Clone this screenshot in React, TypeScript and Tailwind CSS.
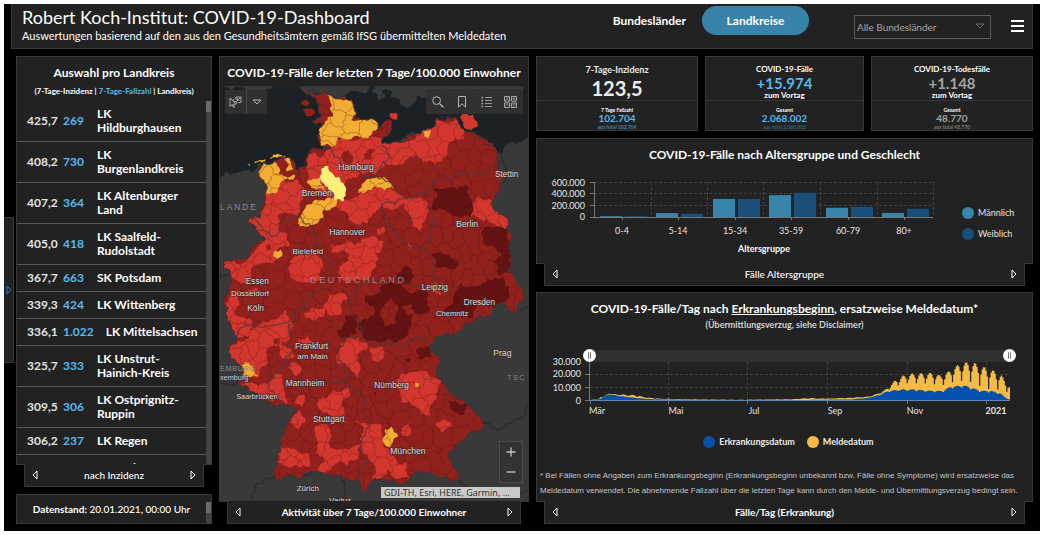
import { useState, type ReactNode } from "react";

type Pt = [number, number];

/* ---------- shared pieces ---------- */

function PagerBar({ label, bold = false }: { label: string; bold?: boolean }) {
  return (
    <nav className="relative z-10 mx-2 -mt-px flex h-[23px] shrink-0 items-center justify-between border border-t-0 border-[#3a3a3a] bg-[#222] px-1 text-white">
      <button type="button" aria-label="Zurück" className="flex h-4 w-3 items-center justify-center">
        <svg viewBox="0 0 6 10" className="h-2.5 w-1.5" fill="none" stroke="currentColor">
          <path d="M5 1 1 5l4 4z" />
        </svg>
      </button>
      <span className={bold ? "text-[10px] font-bold" : "text-[10px] font-medium"}>{label}</span>
      <button type="button" aria-label="Weiter" className="flex h-4 w-3 items-center justify-center">
        <svg viewBox="0 0 6 10" className="h-2.5 w-1.5" fill="none" stroke="currentColor">
          <path d="m1 1 4 4-4 4z" />
        </svg>
      </button>
    </nav>
  );
}

function Panel({ className = "", children }: { className?: string; children: ReactNode }) {
  return <section className={`flex flex-col border border-[#3a3a3a] bg-[#222] ${className}`}>{children}</section>;
}

/* ---------- header ---------- */

function Header() {
  return (
    <header className="mx-[7px] flex h-[45px] shrink-0 items-center border border-t-0 border-[#3a3a3a] bg-[#222] pl-2.5 pr-2 text-white">
      <div className="flex-1 whitespace-nowrap">
        <h1 className="text-[18px] leading-5">Robert Koch-Institut: COVID-19-Dashboard</h1>
        <p className="text-[11px] leading-[18px]">
          Auswertungen basierend auf den aus den Gesundheitsämtern gemäß IfSG übermittelten Meldedaten
        </p>
      </div>
      <div className="mt-0.5 flex items-center self-start text-[12px] font-bold">
        <button type="button" className="h-[29px] px-4">Bundesländer</button>
        <button type="button" className="h-[29px] w-[107px] rounded-full bg-[#3783a9]">Landkreise</button>
      </div>
      <label className="relative ml-[45px] block">
        <span className="sr-only">Bundesland</span>
        <select className="h-6 w-[137px] appearance-none border border-[#5c5c5c] bg-[#222] px-0.5 text-[10px] leading-4 text-[#a5a5a5]">
          <option>Alle Bundesländer</option>
        </select>
        <svg viewBox="0 0 10 6" className="pointer-events-none absolute right-1.5 top-2.5 h-1.5 w-2.5" fill="none" stroke="#6d6d6d">
          <path d="M1 1h8L5 5z" />
        </svg>
      </label>
      <button type="button" aria-label="Menü" className="ml-5 flex w-[13px] flex-col gap-[3px]">
        <span className="h-0.5 w-full bg-white" />
        <span className="h-0.5 w-full bg-white" />
        <span className="h-0.5 w-full bg-white" />
      </button>
    </header>
  );
}

/* ---------- district list ---------- */

const districts: [string, string, string][] = [
  ["425,7", "269", "LK Hildburghausen"],
  ["408,2", "730", "LK Burgenlandkreis"],
  ["407,2", "364", "LK Altenburger Land"],
  ["405,0", "418", "LK Saalfeld-Rudolstadt"],
  ["367,7", "663", "SK Potsdam"],
  ["339,3", "424", "LK Wittenberg"],
  ["336,1", "1.022", "LK Mittelsachsen"],
  ["325,7", "333", "LK Unstrut-Hainich-Kreis"],
  ["309,5", "306", "LK Ostprignitz-Ruppin"],
  ["306,2", "237", "LK Regen"],
  ["301,8", "585", "LK Saale-Holzland-Kreis"],
];

function DistrictColumn() {
  return (
    <div className="flex min-h-0 flex-col">
      <Panel className="min-h-0 flex-1 basis-0">
        <div className="h-11 shrink-0 pt-2 text-center text-white">
          <h2 className="text-[12px] font-bold leading-4">Auswahl pro Landkreis</h2>
          <p className="pt-1 text-[8px] font-bold leading-3">
            (7-Tage-Inzidenz | <span className="text-[#56b9f0]">7-Tage-Fallzahl</span> | Landkreis)
          </p>
        </div>
        <div className="flex min-h-0 flex-1">
          <ul className="flex-1 overflow-hidden">
            {districts.map(([rate, cases, name]) => (
              <li key={name} className="flex items-center border-b border-[#585858] py-1.5 pl-2.5 pr-0.5 text-[12px] font-bold leading-[14px]">
                <span className="w-9 shrink-0 text-[#e2e2e2]">{rate}</span>
                <span className="min-w-[22px] shrink-0 text-[#56b9f0]">{cases}</span>
                <span className="ml-3 max-w-[97px] text-white">{name}</span>
              </li>
            ))}
          </ul>
          <div className="w-[5px] bg-[#424242]">
            <div className="h-[11px] bg-[#6a6a6a]" />
          </div>
        </div>
      </Panel>
      <PagerBar label="nach Inzidenz" />
      <Panel className="mt-[7px] h-[30px]">
        <div className="flex h-full">
          <p className="flex-1 self-center whitespace-nowrap text-center text-[10px] font-medium text-white">
            <b>Datenstand:</b> 20.01.2021, 00:00 Uhr
          </p>
          <div className="mt-[7px] w-[5px] bg-[#424242]">
            <div className="h-[11px] bg-[#6a6a6a]" />
          </div>
        </div>
      </Panel>
    </div>
  );
}

/* ---------- map ---------- */

function hash(a: number, b: number) {
  const s = Math.sin(a * 12.9898 + b * 78.233) * 43758.5453;
  return s - Math.floor(s);
}

/* Splits an edge and displaces its middle; both directions give the same curve. */
function split(a: Pt, b: Pt, amount: number, out: Pt[]) {
  const dx = b[0] - a[0];
  const dy = b[1] - a[1];
  const len = Math.hypot(dx, dy);
  if (len < 9) {
    out.push(b);
    return;
  }
  const k = (hash(a[0] + b[0], a[1] + b[1]) - 0.5) * amount;
  const sign = dx > 0 || (dx === 0 && dy > 0) ? 1 : -1;
  const m: Pt = [(a[0] + b[0]) / 2 - dy * k * sign, (a[1] + b[1]) / 2 + dx * k * sign];
  split(a, m, amount, out);
  split(m, b, amount, out);
}

function parse(s: string): Pt[] {
  return s.split(" ").map((p) => p.split(",").map(Number) as Pt);
}

function toPath(pts: Pt[], closed = true, amount = 0.5) {
  const out: Pt[] = [pts[0]];
  const n = closed ? pts.length : pts.length - 1;
  for (let i = 0; i < n; i++) split(pts[i], pts[(i + 1) % pts.length], amount, out);
  return "M" + out.map((p) => `${p[0].toFixed(1)} ${p[1].toFixed(1)}`).join("L") + (closed ? "Z" : "");
}

const rough = (s: string, closed = true, amount = 0.5) => toPath(parse(s), closed, amount);

/* Voronoi cells on a jittered grid stand for the district borders. */
function districtBorders() {
  const step = 46;
  const seeds: Pt[] = [];
  for (let y = 80; y < 1380; y += step)
    for (let x = -20; x < 990; x += step) seeds.push([x + hash(x, y) * 42, y + hash(y, x) * 42]);
  let d = "";
  for (const s of seeds) {
    let poly: Pt[] = [
      [s[0] - 90, s[1] - 90],
      [s[0] + 90, s[1] - 90],
      [s[0] + 90, s[1] + 90],
      [s[0] - 90, s[1] + 90],
    ];
    for (const t of seeds) {
      if (t === s || Math.abs(t[0] - s[0]) > 150 || Math.abs(t[1] - s[1]) > 150) continue;
      const nx = t[0] - s[0];
      const ny = t[1] - s[1];
      const c = (nx * (t[0] + s[0]) + ny * (t[1] + s[1])) / 2;
      const next: Pt[] = [];
      poly.forEach((p, i) => {
        const q = poly[(i + 1) % poly.length];
        const dp = nx * p[0] + ny * p[1] - c;
        const dq = nx * q[0] + ny * q[1] - c;
        if (dp <= 0) next.push(p);
        if (dp < 0 !== dq < 0) {
          const k = dp / (dp - dq);
          next.push([p[0] + (q[0] - p[0]) * k, p[1] + (q[1] - p[1]) * k]);
        }
      });
      poly = next;
    }
    if (poly.length > 2) d += toPath(poly.map((p) => [Math.round(p[0]), Math.round(p[1])] as Pt), true, 0.55);
  }
  return d;
}

const bordersPath = districtBorders();

const country = rough(
  "288,124 330,128 345,135 385,138 410,150 418,165 425,190 415,203 440,210 470,205 490,228 492,240 500,225 520,210 532,215 530,240 505,262 500,280 520,280 555,278 590,255 625,240 650,235 665,205 700,200 725,205 748,240 770,245 800,265 830,290 848,305 852,350 862,380 858,430 835,450 828,465 850,485 880,510 875,540 890,580 892,640 880,665 905,690 922,715 923,755 902,790 885,782 870,762 850,765 835,785 800,800 780,815 740,845 700,850 670,860 655,880 645,890 655,910 675,935 665,960 680,1000 700,1025 730,1050 755,1065 780,1085 800,1110 802,1138 765,1150 755,1170 720,1190 700,1210 705,1235 720,1260 728,1290 710,1298 695,1280 660,1280 630,1270 600,1270 580,1295 550,1305 520,1300 500,1290 480,1290 465,1300 460,1325 448,1328 435,1305 425,1290 390,1292 365,1280 340,1275 320,1270 290,1265 280,1270 255,1288 215,1282 200,1290 180,1285 185,1250 185,1220 195,1190 205,1160 215,1130 235,1095 248,1075 215,1068 190,1068 160,1055 130,1040 100,1025 95,1010 70,1002 70,990 85,970 75,950 45,930 40,905 60,880 65,860 50,840 35,815 30,790 40,775 20,765 30,740 40,720 50,695 45,670 25,655 25,635 60,630 100,625 105,605 150,570 130,555 120,530 98,520 105,505 135,505 140,470 150,430 148,400 128,385 128,365 145,335 185,332 225,325 240,350 245,375 255,350 275,350 275,320 285,300 320,298 345,295 315,288 308,260 310,240 325,215 300,225 290,215 320,195 310,180 305,150",
);

const sea = [
  rough("12,100 252,100 262,125 300,130 330,220 320,305 290,330 260,385 225,330 130,340 110,368 60,372 12,382"),
  rough("380,140 400,128 450,132 470,100 942,100 942,262 890,275 868,292 858,310 840,300 700,240 500,300 420,220 400,170"),
];

const foreignIslands = [
  rough("525,118 575,112 612,120 606,145 588,170 560,165 530,142"),
  rough("470,122 500,118 512,138 490,150"),
  rough("590,100 700,100 680,125 620,122"),
  rough("740,100 830,100 800,118 760,116"),
];

const germanIslands = {
  mid: [
    rough("262,110 275,120 268,130"),
    rough("256,150 275,148 284,160 270,168 258,162"),
    rough("262,180 290,176 300,190 280,200"),
    rough("800,262 835,280 838,305 812,300"),
  ],
  bright: [rough("736,200 775,195 790,225 770,240 745,225"), rough("524,192 548,192 548,208 530,206")],
  orange: [rough("92,344 105,340 104,350"), rough("118,336 150,328 150,332 118,340"), rough("165,324 210,318 208,323 165,328")],
};

const bright = [
  "345,270 400,272 460,268 500,265 560,278 620,245 665,205 725,205 748,240 750,265 700,285 695,320 660,345 625,335 605,310 580,325 540,345 505,335 510,350 480,375 450,370 400,385 390,400 385,450 440,430 480,415 530,420 580,445 640,465 635,500 615,545 590,530 580,490 570,460 500,465 480,490 460,520 430,524 400,500 380,485 360,470 330,440 310,420 275,400 275,310 350,300",
  "765,470 790,440 835,450 850,485 880,510 872,542 850,535 830,520 800,510 770,500",
  "150,430 200,395 250,390 265,410 262,450 245,500 210,490 185,500 190,540 215,555 220,590 185,600 175,640 125,645 105,690 85,700 60,690 25,655 25,635 100,625 150,570 98,520 105,505 135,500",
  "220,660 245,620 300,610 325,650 320,690 260,700 225,680",
  "345,580 400,570 420,590 480,560 508,575 500,600 480,610 485,650 440,690 400,700 370,670 385,640 400,610 350,610",
  "485,540 505,530 510,550 490,555",
  "580,580 590,590 580,602",
  "325,770 340,735 380,730 400,745 375,795 345,798",
  "265,790 290,775 328,772 325,800 300,815 270,805",
  "30,770 45,740 75,720 70,770 62,800 110,815 100,860 65,865 35,815",
  "95,720 125,715 130,735 105,740",
  "45,890 100,870 110,840 180,810 210,780 235,830 222,870 200,880 232,900 240,920 200,925 190,885 160,895 160,940 135,955 125,985 85,970 45,930 40,905",
  "100,1000 160,1000 172,970 200,975 205,1010 215,1065 170,1055 110,1030 80,1005",
  "220,955 240,940 260,960 245,980",
  "238,1060 265,1035 258,1075",
  "235,1095 255,1085 270,1120 250,1140 225,1120",
  "250,870 275,860 290,880 265,890",
  "370,910 400,865 455,880 455,900 425,915 435,950 425,1000 405,960 365,940",
  "465,895 500,890 510,910 490,940 470,920",
  "545,990 580,970 650,985 680,1000 665,1050 650,1102 600,1070 560,1060 550,1020",
  "660,1120 690,1110 710,1130 680,1150",
  "310,1050 350,1025 400,1015 405,1040 380,1060 390,1100 360,1110 320,1085",
  "302,1130 335,1125 340,1180 380,1200 435,1190 430,1230 360,1245 330,1270 290,1265 325,1240 300,1210 310,1180",
  "190,1200 240,1200 285,1215 285,1250 220,1255 185,1240",
  "420,1115 450,1120 500,1125 505,1190 530,1220 545,1250 580,1235 582,1290 540,1290 520,1260 500,1290 470,1290 480,1250 460,1220 435,1190 445,1150",
  "560,1140 590,1110 582,1160 562,1160",
  "655,705 670,700 680,735 660,725",
].map((s) => rough(s));

const mid = [
  "380,315 400,300 415,320 405,345 385,335",
  "445,315 480,295 470,330 440,335",
  "240,350 275,350 272,420 245,390",
  "150,590 165,585 170,600 155,605",
  "175,870 190,865 192,885 178,885",
].map((s) => rough(s));

const dark = [
  "650,405 700,415 750,405 770,450 760,500 720,500 690,480 650,480",
  "805,540 850,530 890,580 890,650 880,670 850,675 835,640 860,610 805,580",
  "655,610 700,615 735,640 720,660 660,650",
  "545,670 570,650 598,680 590,705 550,700",
  "450,740 500,705 560,700 580,730 640,730 640,790 600,790 580,840 545,880 490,880 440,850 430,820 480,790 450,760",
  "370,840 390,800 425,800 425,850 395,865 368,850",
  "690,780 740,700 790,710 820,690 870,690 885,740 800,760 780,815 740,795 695,800",
  "605,910 640,890 645,925 615,930",
  "570,930 585,925 580,940",
  "470,1030 485,1028 482,1038",
  "700,1055 760,1060 750,1095 715,1085",
].map((s) => rough(s));

const thuringiaGaps = [
  "505,770 530,745 550,770 545,820 510,830 495,800",
  "560,770 590,760 600,790 575,795",
].map((s) => rough(s));

const orange = [
  "335,135 410,140 425,190 400,215 440,210 470,205 492,235 460,265 400,270 370,262 350,292 315,288 308,240 330,215 355,200 350,165",
  "128,365 145,335 178,335 190,370 210,380 240,375 235,390 200,395 180,430 150,425 148,390",
  "208,326 225,325 235,360 215,365",
  "275,400 315,385 325,410 345,435 310,415",
  "255,530 260,495 300,450 365,445 360,470 325,480 325,505 290,525",
  "430,430 450,395 480,385 520,390 538,418 480,410",
  "175,605 195,600 200,620 185,630",
  "624,245 645,238 640,265 628,258",
  "510,1140 530,1133 550,1158 535,1175 525,1195 512,1190",
  "70,985 80,950 100,940 115,965 128,980 80,992",
  "600,1002 611,1002 611,1011 600,1011",
].map((s) => rough(s));

const stateLines = [
  "345,295 380,345 440,375 480,380 520,330 500,285",
  "480,380 520,395 580,445 640,430 655,390 760,370 852,350",
  "580,445 500,465 510,520 560,570 620,600 650,560 640,470",
  "620,600 650,650 640,720 560,690 480,690 400,750 430,820 500,890 600,860 650,890",
  "105,505 190,550 250,500 300,560 350,640 330,700 240,790 160,830 60,860",
  "240,790 235,900 160,990 200,1068",
  "240,990 340,1000 400,980 365,900 430,860",
  "400,980 450,1060 465,1120 440,1180 430,1290",
].map((s) => rough(s, false));

const foreignLines = [
  "942,770 900,780",
  "802,1120 840,1140 900,1110 942,1070",
  "290,1265 200,1290 120,1310 110,1356",
  "380,1285 390,1320 360,1356",
  "728,1290 760,1320 830,1335 942,1320",
  "12,690 60,650",
  "12,1000 70,995",
  "858,310 872,350 865,400",
].map((s) => rough(s, false));

const cityLabels: [string, number, number, number][] = [
  ["Hamburg", 423, 361, 26],
  ["Bremen", 305, 440, 26],
  ["Stettin", 876, 381, 25],
  ["Berlin", 757, 532, 26],
  ["Hannover", 397, 556, 25],
  ["Bielefeld", 278, 612, 24],
  ["Essen", 126, 703, 25],
  ["Düsseldorf", 104, 741, 24],
  ["Köln", 121, 785, 25],
  ["Leipzig", 660, 720, 25],
  ["Dresden", 794, 766, 25],
  ["Chemnitz", 712, 800, 23],
  ["Frankfurt", 289, 900, 25],
  ["am Main", 292, 928, 24],
  ["Prag", 863, 920, 26],
  ["Mannheim", 270, 1010, 25],
  ["Nürnberg", 530, 1015, 25],
  ["Saarbrücken", 125, 1048, 22],
  ["Stuttgart", 341, 1119, 25],
  ["München", 579, 1214, 26],
  ["Zürich", 278, 1326, 24],
  ["Vaduz", 375, 1362, 24],
];

function GermanyMap() {
  return (
    <svg viewBox="12 108 930 1248" preserveAspectRatio="xMidYMid slice" className="absolute inset-0 h-full w-full" role="img" aria-label="Karte der 7-Tage-Inzidenz je Landkreis">
      <defs>
        <clipPath id="country">
          <path d={country} />
        </clipPath>
      </defs>
      <rect x="12" y="108" width="930" height="1248" fill="#393939" />
      {sea.map((d) => <path key={d} d={d} fill="#1b2124" />)}
      {foreignIslands.map((d) => <path key={d} d={d} fill="#393939" />)}
      {foreignLines.map((d) => <path key={d} d={d} fill="none" stroke="#2a2d2e" strokeWidth="4" />)}
      <path d={country} fill="#92211d" />
      {germanIslands.mid.map((d) => <path key={d} d={d} fill="#92211d" />)}
      {germanIslands.bright.map((d) => <path key={d} d={d} fill="#d3362e" />)}
      {germanIslands.orange.map((d) => <path key={d} d={d} fill="#f2ad33" />)}
      <g clipPath="url(#country)">
        {bright.map((d) => <path key={d} d={d} fill="#d3362e" />)}
        {mid.map((d) => <path key={d} d={d} fill="#92211d" />)}
        {dark.map((d) => <path key={d} d={d} fill="#641312" />)}
        {thuringiaGaps.map((d) => <path key={d} d={d} fill="#92211d" />)}
        {orange.map((d) => <path key={d} d={d} fill="#f2ad33" />)}
        <path d={bordersPath} fill="none" stroke="#4a2020" strokeOpacity="0.32" strokeWidth="1.5" />
        <path d={rough("320,355 340,350 355,375 385,400 393,422 385,455 360,450 350,425 325,400")} fill="#fcf07c" />
        {stateLines.map((d) => <path key={d} d={d} fill="none" stroke="#4a3838" strokeOpacity="0.7" strokeWidth="4" />)}
      </g>
      <path d={country} fill="none" stroke="#3c3434" strokeWidth="3" />
      <g fontFamily="'Liberation Sans', Arial, sans-serif" textAnchor="middle">
        <g fill="#8a8a8a" fontSize="25">
          <text x="14" y="480" textAnchor="start" letterSpacing="6">LANDE</text>
          <text x="430" y="699" fill="#a5837f" fontSize="27" letterSpacing="8">DEUTSCHLAND</text>
          <text x="14" y="965" textAnchor="start" fontSize="22" letterSpacing="2">EMBURG</text>
          <text x="878" y="992" textAnchor="start" fontSize="22" letterSpacing="4">TSC</text>
        </g>
        <text x="14" y="991" textAnchor="start" fontSize="22" fill="#d0cccc" stroke="#333" strokeWidth="3" paintOrder="stroke">xemburg</text>
        {cityLabels.map(([name, x, y, size]) => (
          <text key={name} x={x} y={y} fontSize={size} fill="#dedada" stroke="#3a2a2a" strokeOpacity="0.8" strokeWidth="4" paintOrder="stroke">
            {name}
          </text>
        ))}
      </g>
    </svg>
  );
}

const toolButton = "flex h-full flex-1 items-center justify-center";

function MapColumn() {
  return (
    <div className="flex min-h-0 flex-col">
      <Panel className="min-h-0 flex-1 basis-0">
        <h2 className="h-[29px] shrink-0 whitespace-nowrap pt-2 text-center text-[12px] font-bold leading-4 text-white">
          COVID-19-Fälle der letzten 7 Tage/100.000 Einwohner
        </h2>
        <div className="relative min-h-0 flex-1 overflow-hidden">
          <GermanyMap />
          <div className="absolute left-[5px] top-1 flex h-6 w-[42px] bg-[#303030] text-[#b5b5b5]">
            <button type="button" aria-label="Auswählen" className={`${toolButton} border-r border-[#484848]`}>
              <svg viewBox="0 0 13 12" className="h-3 w-[13px]" fill="none" stroke="currentColor" strokeWidth="0.9">
                <path d="M1 2v8.5l2-2 1.5 3 1-.6-1.3-2.7H7zM4 4.5V3.6h1.4M7 3.6V1h5v5.6H9.2M5 5.6h2.6v2.2M8 5l3-3M8.4 2.4v1.8h1.8" />
              </svg>
            </button>
            <button type="button" aria-label="Auswahlart" className={toolButton}>
              <svg viewBox="0 0 10 6" className="h-1.5 w-2.5" fill="none" stroke="currentColor">
                <path d="M1 1h8L5 5z" />
              </svg>
            </button>
          </div>
          <div className="absolute right-[5px] top-[3px] flex h-[25px] w-[97px] bg-[#303030] text-[#b5b5b5]">
            <button type="button" aria-label="Suche" className={toolButton}>
              <svg viewBox="0 0 12 12" className="size-3" fill="none" stroke="currentColor">
                <circle cx="4.6" cy="4.6" r="3.9" />
                <path d="m7.4 7.4 4.1 4.1" strokeWidth="1.3" />
              </svg>
            </button>
            <button type="button" aria-label="Lesezeichen" className={toolButton}>
              <svg viewBox="0 0 8 12" className="h-3 w-2" fill="none" stroke="currentColor">
                <path d="M.5.5h7v10.6L4 7.8.5 11.1z" />
              </svg>
            </button>
            <button type="button" aria-label="Legende" className={toolButton}>
              <svg viewBox="0 0 11 12" className="h-3 w-[11px]" fill="none" stroke="currentColor">
                <path d="M4 1.5h7M4 4.5h7M4 7.5h7M4 10.5h7" strokeWidth="0.8" />
                <path d="M.5 1.5H2M.5 4.5H2M.5 7.5H2M.5 10.5H2" strokeWidth="1.4" />
              </svg>
            </button>
            <button type="button" aria-label="Grundkarte" className={toolButton}>
              <svg viewBox="0 0 13 12" className="h-3 w-[13px]" fill="none" stroke="currentColor" strokeWidth="0.9">
                <path d="M.5.5h5v4.6h-5zM7.5.5h5v4.6h-5zM.5 6.9h5v4.6h-5zM7.5 6.9h5v4.6h-5z" />
                <path d="m1.5 4 3-2.5M2 1.5l2.5 2M8.5 2.8h3M10 1.2v3M1.6 9.8 3 8.2l1.4 1.6M8.6 8.2h3M8.6 10h2" strokeWidth="0.7" />
              </svg>
            </button>
          </div>
          <div className="absolute bottom-[18px] right-[5px] flex h-[42px] w-6 flex-col border border-[#4c4c4c] bg-[#333] text-[#c5c5c5]">
            <button type="button" aria-label="Vergrößern" className={toolButton}>
              <svg viewBox="0 0 10 10" className="size-2.5" stroke="currentColor" strokeWidth="1.3">
                <path d="M5 .5v9M.5 5h9" />
              </svg>
            </button>
            <button type="button" aria-label="Verkleinern" className={toolButton}>
              <svg viewBox="0 0 10 10" className="size-2.5" stroke="currentColor" strokeWidth="1.3">
                <path d="M.5 5h9" />
              </svg>
            </button>
          </div>
          <p className="absolute bottom-[3px] right-2 h-[11px] w-[139px] whitespace-nowrap bg-[#cacaca] pl-[3px] font-['Noto_Sans',sans-serif] text-[9px] leading-[11px] text-[#333]">
            GDI-TH, Esri, HERE, Garmin, …
          </p>
        </div>
      </Panel>
      <PagerBar label="Aktivität über 7 Tage/100.000 Einwohner" bold />
    </div>
  );
}

/* ---------- key figures ---------- */

function TotalBlock({ label, value, note, color, noteColor }: { label: string; value: string; note: string; color: string; noteColor: string }) {
  return (
    <div className="flex flex-1 flex-col items-center border-t border-[#363636] pt-1.5">
      <p className="text-[5px] font-bold leading-[6px] text-white">{label}</p>
      <p className={`text-[10px] font-bold leading-[11px] ${color}`}>{value}</p>
      <p className={`text-[5px] font-bold leading-[6px] ${noteColor}`}>{note}</p>
    </div>
  );
}

function DeltaCard({ title, delta, children, color }: { title: string; delta: string; color: string; children: ReactNode }) {
  return (
    <Panel className="h-[75px]">
      <div className="flex h-[43px] shrink-0 flex-col items-center pt-2 font-bold text-white">
        <h3 className="text-[8px] leading-[9px]">{title}</h3>
        <p className={`text-[15px] leading-[18px] ${color}`}>{delta}</p>
        <p className="text-[8px] leading-[7px]">zum Vortag</p>
      </div>
      {children}
    </Panel>
  );
}

function KeyFigures() {
  return (
    <div className="grid shrink-0 grid-cols-[162fr_159fr_162fr] gap-[7px]">
      <Panel className="h-[75px]">
        <div className="flex h-[43px] shrink-0 flex-col items-center pt-1.5 font-bold">
          <h3 className="text-[9px] leading-[14px] text-[#e8e8e8]">7-Tage-Inzidenz</h3>
          <p className="text-[20px] leading-[22px] text-[#ececec]">123,5</p>
        </div>
        <TotalBlock label="7 Tage Fallzahl" value="102.704" note="aus total 102.704" color="text-[#56b9f0]" noteColor="text-[#3f86ad]" />
      </Panel>
      <DeltaCard title="COVID-19-Fälle" delta="+15.974" color="text-[#56b9f0]">
        <TotalBlock label="Gesamt" value="2.068.002" note="aus total 2.068.002" color="text-[#56b9f0]" noteColor="text-[#2f647f]" />
      </DeltaCard>
      <DeltaCard title="COVID-19-Todesfälle" delta="+1.148" color="text-[#a3a3a3]">
        <TotalBlock label="Gesamt" value="48.770" note="aus total 48.770" color="text-[#a3a3a3]" noteColor="text-[#7c7c7c]" />
      </DeltaCard>
    </div>
  );
}

/* ---------- age chart ---------- */

const ageGroups = [
  { label: "0-4", x: 600, m: 15, f: 14 },
  { label: "5-14", x: 656, m: 68, f: 55 },
  { label: "15-34", x: 713, m: 310, f: 310 },
  { label: "35-59", x: 769, m: 375, f: 415 },
  { label: "60-79", x: 826, m: 158, f: 175 },
  { label: "80+", x: 882, m: 70, f: 140 },
];

function LegendItem({ dot, label }: { dot: string; label: string }) {
  return (
    <li className="flex items-center gap-1">
      <span className={`size-3 shrink-0 rounded-full ${dot}`} />
      {label}
    </li>
  );
}

function AgeChart() {
  const base = 217;
  const perUnit = 35 / 600;
  return (
    <>
      <Panel className="h-[126px] shrink-0">
        <h2 className="pt-2 text-center text-[12px] font-bold leading-4 text-white">COVID-19-Fälle nach Altersgruppe und Geschlecht</h2>
        <div className="flex pl-2 pt-2.5">
          <svg viewBox="545 173 405 86" className="min-w-0 flex-1" role="img" aria-label="Fälle nach Altersgruppe">
            <g stroke="#404040" strokeDasharray="3 2">
              <path d="M594 182.5h339M594 193.5h339M594 205.5h339" />
              <path d="M651.5 182v35M707.5 182v35M763.5 182v35M820.5 182v35M877.5 182v35M933.5 182v35" />
            </g>
            {ageGroups.map((g) => (
              <g key={g.label}>
                <rect x={g.x} y={base - g.m * perUnit} width="22" height={g.m * perUnit} fill="#3785ab" />
                <rect x={g.x + 25} y={base - g.f * perUnit} width="22" height={g.f * perUnit} fill="#194f78" />
                <path d={`M${g.x + 22.5} 217v3`} stroke="#777" />
                <text x={g.x + 22} y="234" textAnchor="middle" fontSize="9" fill="#e4e4e4">{g.label}</text>
              </g>
            ))}
            <path d="M594.5 182v35.5M590 182.5h4M590 193.5h4M590 205.5h4M590 217.5h343" stroke="#777" fill="none" />
            <g fontSize="9" fill="#e4e4e4" textAnchor="end">
              <text x="585" y="186">600.000</text>
              <text x="585" y="197">400.000</text>
              <text x="585" y="209">200.000</text>
              <text x="585" y="220">0</text>
            </g>
            <text x="764" y="252" textAnchor="middle" fontSize="9" fontWeight="700" fill="#fff">Altersgruppe</text>
          </svg>
          <ul className="flex w-[82px] shrink-0 flex-col gap-[9px] pl-3 pt-[34px] text-[9px] leading-3 text-[#e4e4e4]">
            <LegendItem dot="bg-[#3785ab]" label="Männlich" />
            <LegendItem dot="bg-[#194f78]" label="Weiblich" />
          </ul>
        </div>
      </Panel>
      <PagerBar label="Fälle Altersgruppe" />
    </>
  );
}

/* ---------- daily chart ---------- */

function interpolate(points: Pt[], x: number) {
  for (let i = 1; i < points.length; i++) {
    const [x0, y0] = points[i - 1];
    const [x1, y1] = points[i];
    if (x <= x1) return y0 + ((y1 - y0) * (x - x0)) / (x1 - x0);
  }
  return points[points.length - 1][1];
}

/* Cases per day in thousands; the first number is the horizontal place on the axis. */
const peaks: Pt[] = [[590, 0.4], [598, 1], [604, 3.2], [608, 5.4], [618, 4.6], [635, 4.2], [645, 2.3], [660, 1.4], [700, 0.8], [740, 0.6], [790, 1], [808, 2], [825, 1.4], [850, 2.2], [868, 3], [880, 6], [888, 10], [894, 15], [903, 19], [911, 20.5], [930, 21], [940, 19], [948, 22], [957, 27], [965, 29], [974, 28.5], [983, 25.5], [992, 23], [1001, 19], [1007, 12], [1010, 10]];
const troughs: Pt[] = [[590, 0.3], [608, 4.6], [635, 2.5], [660, 0.9], [700, 0.5], [740, 0.3], [790, 0.7], [850, 1.6], [868, 2.2], [880, 5], [893, 9], [905, 11], [925, 11], [945, 10], [955, 13], [968, 13], [985, 8], [1000, 8], [1010, 5]];
const onset: Pt[] = [[590, 0.3], [598, 1], [604, 3], [608, 4.8], [618, 3.4], [635, 1.9], [650, 1], [700, 0.3], [740, 0.2], [790, 0.3], [850, 0.8], [868, 2], [878, 4], [888, 7], [900, 8], [912, 8], [930, 7], [942, 7], [950, 10], [963, 11], [972, 9], [980, 7], [990, 7], [1000, 5], [1005, 2], [1010, 0.4]];

const days = Array.from({ length: 325 }, (_, i) => {
  const x = 590 + (i * 420) / 325;
  const wave = Math.pow(Math.abs(Math.cos(((x - 965.5) / 9.02) * Math.PI)), 0.6);
  const low = interpolate(troughs, x);
  const total = low + (interpolate(peaks, x) - low) * wave;
  const blue = Math.min(total, interpolate(onset, x) * (0.86 + 0.2 * wave));
  return { x, total, blue };
});

const yOf = (v: number) => 401.5 - v * 1.32;

function seriesPath(key: "total" | "blue") {
  return "M590 401.5" + days.map((d) => `V${yOf(d[key]).toFixed(1)}H${(d.x + 1.3).toFixed(1)}`).join("") + "V401.5Z";
}

const totalPath = seriesPath("total");
const onsetPath = seriesPath("blue");

const months: [string, number, number][] = [
  ["Mär", 597, 590],
  ["Mai", 676, 668],
  ["Jul", 754, 747],
  ["Sep", 835, 827],
  ["Nov", 915, 907],
  ["2021", 996, 986],
];

const rangeClass =
  "pointer-events-none col-start-1 row-start-1 h-[13px] w-full appearance-none bg-transparent [&::-webkit-slider-thumb]:pointer-events-auto [&::-webkit-slider-thumb]:size-[13px] [&::-webkit-slider-thumb]:appearance-none [&::-webkit-slider-thumb]:rounded-full [&::-webkit-slider-thumb]:bg-white [&::-webkit-slider-thumb]:bg-[linear-gradient(90deg,#fff_5px,#777_5px,#777_6px,#fff_6px,#fff_7px,#777_7px,#777_8px,#fff_8px)] [&::-webkit-slider-thumb]:shadow-[inset_0_3px_0_#fff,inset_0_-3px_0_#fff]";

function DailyChart() {
  const [from, setFrom] = useState(0);
  const [to, setTo] = useState(325);
  return (
    <>
      <Panel className="mt-1.5 shrink-0 pb-[3px]">
        <div className="pt-2 text-center font-bold">
          <h2 className="text-[12px] leading-4 text-white">
            COVID-19-Fälle/Tag nach <u>Erkrankungsbeginn</u>, ersatzweise Meldedatum*
          </h2>
          <p className="text-[9px] leading-4 text-[#d2d2d2]">(Übermittlungsverzug, siehe Disclaimer)</p>
        </div>
        <div className="relative z-10 ml-[46px] mr-4 mt-4 grid">
          <div className="col-start-1 row-start-1 mx-1.5 mt-px h-3 bg-[#303030]" />
          <input type="range" aria-label="Beginn" min={0} max={325} value={from} onChange={(e) => setFrom(Math.min(+e.target.value, to))} className={rangeClass} />
          <input type="range" aria-label="Ende" min={0} max={325} value={to} onChange={(e) => setTo(Math.max(+e.target.value, from))} className={rangeClass} />
        </div>
        <svg viewBox="545 355 480 64" className="-mt-2 ml-2 mr-[7px]" role="img" aria-label="Fälle pro Tag">
          <g stroke="#404040" strokeDasharray="3 2">
            <path d="M590 362.5h420M590 375.5h420M590 388.5h420" />
            <path d="M668.5 363v38M747.5 363v38M827.5 363v38M907.5 363v38M986.5 363v38" />
          </g>
          <path d={totalPath} fill="#f5bb45" />
          <path d={onsetPath} fill="#0651ad" />
          <path d="M589.5 362v39.5M585 375.5h4M585 388.5h4M585 401.5h5" stroke="#777" />
          <path d="M590 401.5h420" stroke="#5b87bd" />
          <g fontSize="9" fill="#e4e4e4">
            <g textAnchor="end">
              <text x="581" y="366">30.000</text>
              <text x="581" y="378">20.000</text>
              <text x="581" y="392">10.000</text>
              <text x="581" y="405">0</text>
            </g>
            {months.map(([name, x, tick]) => (
              <g key={name}>
                <path d={`M${tick + 0.5} 402v3`} stroke="#777" />
                <text x={x} y="415" textAnchor="middle" fontWeight={name === "2021" ? 700 : 400}>{name}</text>
              </g>
            ))}
          </g>
        </svg>
        <ul className="flex justify-center gap-3 pl-2 pt-[18px] text-[9px] font-bold leading-3 text-[#ececec]">
          <LegendItem dot="bg-[#0651ad]" label="Erkrankungsdatum" />
          <LegendItem dot="bg-[#f5bb45]" label="Meldedatum" />
        </ul>
        <p className="pl-[3px] pt-5 font-['Liberation_Sans',Arial,sans-serif] text-[8px] leading-[15px] text-[#c4c4c4]">
          * Bei Fällen ohne Angaben zum Erkrankungsbeginn (Erkrankungsbeginn unbekannt bzw. Fälle ohne Symptome) wird ersatzweise das
          <br />
          Meldedatum verwendet. Die abnehmende Fallzahl über die letzten Tage kann durch den Melde- und Übermittlungsverzug bedingt sein.
        </p>
      </Panel>
      <PagerBar label="Fälle/Tag (Erkrankung)" bold />
    </>
  );
}

/* ---------- page ---------- */

export default function App() {
  return (
    <div className="flex min-h-screen flex-col bg-white py-1 pl-1 pr-px font-[Lato,sans-serif]">
      <div className="flex flex-1 flex-col bg-black pb-[7px]">
        <Header />
        <main className="mt-[7px] flex flex-1 pr-[7px]">
          <button type="button" aria-label="Seitenleiste öffnen" className="mr-0.5 mt-[161px] flex h-[146px] w-2.5 shrink-0 items-center justify-center border border-l-0 border-[#3a3a3a] bg-[#222]">
            <svg viewBox="0 0 6 10" className="h-2.5 w-1.5" fill="none" stroke="#2f7fc4">
              <path d="m1 1 4 4-4 4z" />
            </svg>
          </button>
          <div className="grid min-w-0 flex-1 grid-cols-[minmax(0,196fr)_minmax(0,310fr)_minmax(0,497fr)] gap-[7px]">
            <DistrictColumn />
            <MapColumn />
            <div className="flex min-h-0 flex-col">
              <KeyFigures />
              <div className="h-[7px] shrink-0" />
              <AgeChart />
              <DailyChart />
            </div>
          </div>
        </main>
      </div>
    </div>
  );
}
